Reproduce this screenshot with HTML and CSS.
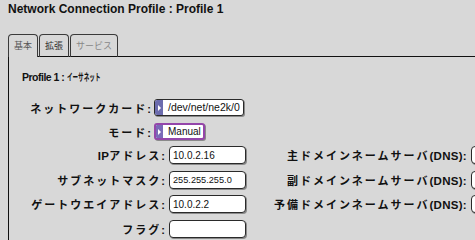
FILE: index.html
```html
<!DOCTYPE html>
<html lang="ja">
<head>
<meta charset="utf-8">
<link rel="stylesheet" href="styles.css">
</head>
<body>
<h1 class="title">Network Connection Profile : Profile 1</h1>
<div class="tabs">
  <div class="tab active">基本</div>
  <div class="tab">拡張</div>
  <div class="tab disabled">サービス</div>
</div>
<div class="panel">
  <h2 class="heading">Profile 1 : <span class="hw">イーサネット</span></h2>
  <div class="grid1">
    <div class="lbl">ネットワークカード:</div>
    <div class="select"><span class="arrow"></span><span class="val">/dev/net/ne2k/0</span></div>
    <div class="lbl">モード:</div>
    <div class="select focus"><span class="arrow"></span><span class="val">Manual</span></div>
  </div>
  <div class="grid2">
    <div class="lbl"><span class="lat">IP</span>アドレス:</div>
    <input class="field" type="text" value="10.0.2.16" readonly>
    <div class="lbl dns">主ドメインネームサーバ<span class="lat">(DNS):</span></div>
    <input class="field" type="text" value="" readonly>

    <div class="lbl">サブネットマスク:</div>
    <input class="field small" type="text" value="255.255.255.0" readonly>
    <div class="lbl dns">副ドメインネームサーバ<span class="lat">(DNS):</span></div>
    <input class="field" type="text" value="" readonly>

    <div class="lbl">ゲートウエイアドレス:</div>
    <input class="field" type="text" value="10.0.2.2" readonly>
    <div class="lbl dns">予備ドメインネームサーバ<span class="lat">(DNS):</span></div>
    <input class="field" type="text" value="" readonly>

    <div class="lbl">フラグ:</div>
    <input class="field" type="text" value="" readonly>
  </div>
</div>
</body>
</html>
```
FILE: styles.css
```css
html, body {
  margin: 0;
  padding: 0;
}
body {
  width: 475px;
  height: 240px;
  overflow: hidden;
  background: #d8d8d8;
  color: #111;
  font-family: "Liberation Sans", "Noto Sans CJK JP", sans-serif;
}
.title {
  margin: 0;
  padding: 2px 0 0 8px;
  font-size: 12px;
  line-height: 14px;
  font-weight: bold;
  color: #111;
}
.tabs {
  display: flex;
  gap: 1px;
  margin: 18px 0 0 8px;
  height: 23px;
  background: linear-gradient(#111, #111) 0 100% / 100% 1px no-repeat;
}
.tab {
  box-sizing: border-box;
  height: 23px;
  border: 1px solid #3a3a3a;
  border-bottom: none;
  border-radius: 4px 4px 0 0;
  padding: 0 5px;
  font-family: "Noto Sans CJK JP", sans-serif;
  font-size: 9px;
  line-height: 22px;
  color: #333;
}
.tab.active {
  background: #d8d8d8;
  color: #555;
}
.tab.disabled {
  color: #888;
}
.panel {
  margin-left: 8px;
  border-left: 1px solid #111;
  padding: 13px 0 0 13px;
  height: 200px;
}
.heading {
  margin: 0 0 15px;
  font-size: 10.5px;
  letter-spacing: -0.5px;
  line-height: 14px;
  font-weight: bold;
  white-space: nowrap;
}
.hw {
  display: inline-block;
  font-family: "Noto Sans CJK JP", sans-serif;
  font-size: 10px;
  letter-spacing: 0;
  transform: scaleX(0.56);
  transform-origin: 0 50%;
}
.lbl {
  font-family: "Liberation Sans", "Noto Sans CJK JP", sans-serif;
  font-size: 11px;
  font-weight: bold;
  letter-spacing: 2px;
  text-align: right;
  white-space: nowrap;
  color: #111;
}
.lat {
  letter-spacing: 0.3px;
  font-size: 11.5px;
}
.grid1 {
  display: grid;
  grid-template-columns: 131px max-content;
  grid-auto-rows: 17px;
  column-gap: 1px;
  row-gap: 7px;
  align-items: center;
}
.select {
  box-sizing: border-box;
  height: 17px;
  display: flex;
  align-items: stretch;
  border: 1px solid #2a2a2a;
  border-radius: 3px;
  box-shadow: 1px 1px 0 #8a8a8a;
  background: #fff;
  overflow: hidden;
  justify-self: start;
}
.select.focus {
  border: 2px solid #9446aa;
  height: 17px;
}
.arrow {
  width: 8px;
  background: #6c6cae;
  display: flex;
  align-items: center;
  justify-content: center;
}
.select.focus .arrow {
  width: 7px;
  background: #7a6ab8;
}
.arrow::before {
  content: "";
  border-left: 3px solid #fff;
  border-top: 3px solid transparent;
  border-bottom: 3px solid transparent;
}
.val {
  font-size: 10.5px;
  line-height: 15px;
  padding: 0 3px 0 5px;
  color: #111;
}
.select.focus .val {
  font-size: 10px;
  line-height: 13px;
  padding: 0 2px 0 5px;
}
.grid2 {
  display: grid;
  grid-template-columns: 145px 77px 221px 77px;
  grid-auto-rows: 18px;
  column-gap: 2px;
  row-gap: 6.5px;
  align-items: center;
  margin-top: 6px;
}
.grid2 .dns {
  padding-right: 2px;
}
.field {
  box-sizing: border-box;
  width: 77px;
  height: 18px;
  margin: 0;
  border: 1px solid #2a2a2a;
  border-radius: 4px;
  box-shadow: 1px 1px 0 #8a8a8a;
  background: #fff;
  padding: 0 3px;
  font-family: "Liberation Sans", sans-serif;
  font-size: 10px;
  color: #111;
  outline: none;
}
.field.small {
  font-size: 9.2px;
}
```
